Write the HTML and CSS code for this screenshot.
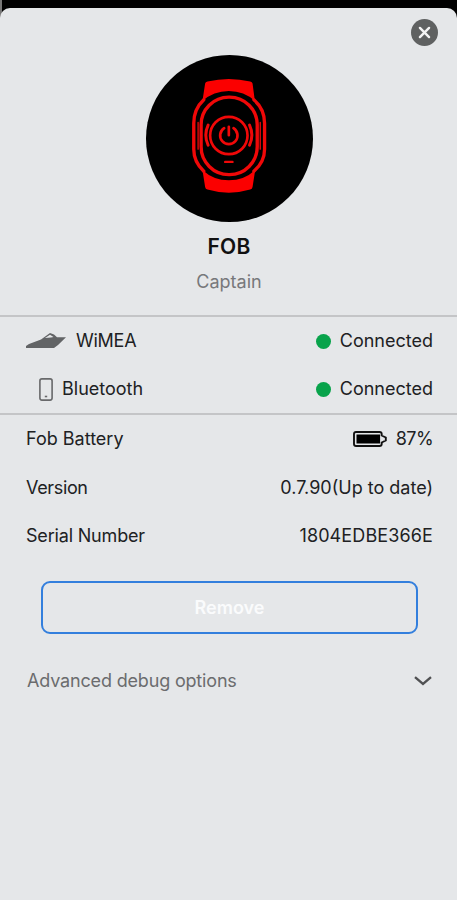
FILE: index.html
```html
<!DOCTYPE html>
<html lang="en">
<head>
<meta charset="utf-8">
<title>FOB</title>
<link rel="stylesheet" href="styles.css">
</head>
<body>
<main class="sheet">
  <header class="profile">
    <button class="close" aria-label="Close">
      <svg viewBox="0 0 26 26"><circle cx="13" cy="13" r="13"/><path d="M8.6 8.6l8.8 8.8M17.4 8.6l-8.8 8.8"/></svg>
    </button>
    <svg class="avatar" viewBox="18 16 500 500">
      <circle cx="268" cy="266" r="250"/>
      <g class="strap">
        <path d="M195 101Q196 97 202 95Q266 80 330 95Q336 97 337 101L344 154Q312 124 266 124Q220 124 187 154Z"/>
        <path d="M187 360Q220 391 266 391Q312 391 345 360L337 411Q336 417 330 419Q266 438 202 419Q196 417 195 411Z"/>
      </g>
      <g class="lines">
        <path d="M191 150Q161 178 161 220V298Q161 336 191 364M341 150Q373 178 373 220V298Q373 336 341 364" stroke-width="10"/>
        <path d="M174 218V298M360 218V298" stroke-width="4"/>
        <rect x="183" y="142" width="168" height="232" rx="83" stroke-width="10"/>
        <circle cx="266" cy="257" r="56" stroke-width="8"/>
        <path d="M252 235A26 26 0 1 0 280 235M266 231V256" stroke-width="8"/>
        <path d="M204 226Q190 256 204 286M328 226Q342 256 328 286" stroke-width="9"/>
        <path d="M255 336H277" stroke-width="7"/>
      </g>
    </svg>
    <h1 class="name">FOB</h1>
    <p class="role">Captain</p>
  </header>

  <section class="group links">
    <div class="row">
      <span class="label wimea"><svg class="boat" viewBox="0 0 40 16"><path d="M0 15V13L3 11L15 6.5L24 0L28 1.5L31 4.3H40L32 12L28 15Z"/><path class="window" d="M19 5L24 1.7L27.5 4L25 4.5Z"/></svg>WiMEA</span>
      <span class="value status"><i class="dot"></i>Connected</span>
    </div>
    <div class="row">
      <span class="label bluetooth"><svg class="phone" viewBox="0 0 14 23"><rect x=".9" y=".9" width="12.2" height="21.2" rx="2"/><path d="M5.8 18.5h2.4"/></svg>Bluetooth</span>
      <span class="value status"><i class="dot"></i>Connected</span>
    </div>
  </section>

  <section class="group details">
    <div class="row">
      <span class="label">Fob Battery</span>
      <span class="value percent"><svg class="battery" viewBox="0 0 34 16"><path class="case" d="M3 1H26.5Q28.7 1 28.7 3V4.5L32.8 6.5V9.5L28.7 11.5V13Q28.7 15 26.5 15H3Q1 15 1 13V3Q1 1 3 1Z"/><rect x="3.5" y="3.5" width="23.6" height="9"/></svg>87%</span>
    </div>
    <div class="row">
      <span class="label version-label">Version</span>
      <span class="value">0.7.90(Up to date)</span>
    </div>
    <div class="row">
      <span class="label serial-label">Serial Number</span>
      <span class="value serial">1804EDBE366E</span>
    </div>
  </section>

  <button class="remove">Remove</button>
  <div class="advanced">
    <span>Advanced debug options</span>
    <svg class="chevron" viewBox="0 0 18 10"><path d="M1 1.2L9 8L17 1.2"/></svg>
  </div>
</main>
</body>
</html>
```
FILE: styles.css
```css
* { box-sizing: border-box; }
body {
  margin: 0;
  padding-top: 8px;
  height: 900px;
  background: linear-gradient(90deg, #777 0 2px, #000 2px) 0 0 / 100% 20px no-repeat, #e5e7e9;
  font-family: Inter, "Liberation Sans", sans-serif;
  font-size: 18px;
  line-height: 24px;
  color: #202123;
  overflow: hidden;
}
svg { display: block; flex: none; }
button { font: inherit; padding: 0; background: none; border: 0; }
.sheet {
  height: 892px;
  background: #e5e7e9;
  border-radius: 10px 10px 0 0;
}
.profile {
  position: relative;
  height: 307px;
  padding: 47px 0 0 1px;
  display: flex;
  flex-direction: column;
  align-items: center;
}
.close { position: absolute; top: 11px; right: 19px; }
.close svg { width: 27px; height: 27px; }
.close circle { fill: #5f6161; }
.close path { stroke: #f4f4f4; stroke-width: 2.3; stroke-linecap: round; }
.avatar { width: 167px; height: 167px; }
.strap { fill: #fb0000; }
.lines { fill: none; stroke: #f00808; stroke-linecap: round; }
.name { margin: 12px 0 0; font-size: 21px; line-height: 26px; font-weight: 600; letter-spacing: .2px; color: #111; }
.role { margin: 10px 0 0; color: #77787b; }
.group { border-top: 2px solid #c4c5c7; padding: 0 24px 0 26px; }
.links { height: 98px; }
.details { height: 147px; }
.row { height: 48.5px; display: flex; align-items: center; justify-content: space-between; }
.links .row + .row { height: 47.5px; }
.label, .value { display: flex; align-items: center; }
.wimea { letter-spacing: -.25px; }
.version-label { letter-spacing: -.35px; }
.serial-label { letter-spacing: -.18px; }
.serial { letter-spacing: .12px; }
.percent { letter-spacing: -.6px; }
.boat { width: 40px; height: 16px; margin-right: 10px; fill: #626466; }
.boat .window { fill: #e5e7e9; }
.phone { width: 14px; height: 23px; margin: 0 9px 0 13px; fill: none; stroke: #68696b; stroke-width: 1.6; }
.dot { width: 15px; height: 15px; border-radius: 50%; margin-right: 9px; background: #08a34b; }
.battery { width: 34px; height: 16px; margin-right: 9px; }
.battery .case { fill: none; stroke: #111; stroke-width: 1.9; }
.remove {
  display: block;
  width: 377px;
  height: 53px;
  margin: 21px 0 0 41px;
  border: 2px solid #337fdd;
  border-radius: 9px;
  color: #fafbfc;
  font-weight: 600;
}
.advanced {
  display: flex;
  align-items: center;
  justify-content: space-between;
  margin: 35px 25px 0 27px;
  letter-spacing: -.17px;
  color: #6b6c6e;
}
.chevron { width: 18px; height: 10px; fill: none; stroke: #505153; stroke-width: 2.3; }
```
